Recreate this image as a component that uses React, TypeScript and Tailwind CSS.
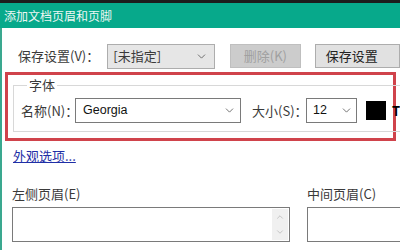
import { ChevronDown, ChevronUp } from 'lucide-react';

const font = { fontFamily: '"Noto Sans CJK SC", "Noto Sans", sans-serif' };

function Combo({ value, className }: { value: string; className: string }) {
  return (
    <div className={`flex items-center justify-between border ${className}`}>
      <span className="font-['Liberation_Sans',Arial,sans-serif]">{value}</span>
      <ChevronDown className="w-[13px] h-[13px] text-[#555]" strokeWidth={1.5} />
    </div>
  );
}

export default function App() {
  return (
    <div
      className="w-[400px] h-[250px] overflow-hidden bg-white flex flex-col text-[13px] text-[#3a3a3a]"
      style={font}
    >
      <div className="h-[3px] bg-[#1c1c1c]" />
      <div className="h-[25px] bg-[#07a98b] text-[#eef7f4] flex items-center px-[4px] text-[12px]">
        添加文档页眉和页脚
      </div>

      <div className="flex-1 border-l-2 border-[#3aa88f] flex flex-col">
        {/* 保存设置 */}
        <div className="flex items-center h-[24px] mt-[16px] whitespace-nowrap">
          <span className="ml-[16px] w-[95px]">保存设置(V)：</span>
          <div className="flex items-center justify-between border w-[114px] h-[25px] bg-[#e6e6e6] border-[#adadad] pl-[5px] pr-[6px]">
            <span>[未指定]</span>
            <ChevronDown className="w-[13px] h-[13px] text-[#555]" strokeWidth={1.5} />
          </div>
          <button className="ml-[15px] w-[75px] h-[24px] bg-[#cccccc] border border-[#bfbfbf] text-[#a0a0a0]">
            删除(K)
          </button>
          <button className="ml-[14px] w-[90px] h-[24px] bg-[#e1e1e1] border border-[#adadad] text-[#222] text-left pl-[10px]">
            保存设置
          </button>
        </div>

        {/* 字体 - highlighted */}
        <div className="mt-[4px] ml-[3px] w-[391px] h-[69px] border-[3px] border-[#d0434b] pl-[5px] pt-[3px] pb-[6px]">
          <fieldset className="border border-[#d8d8d8] h-full px-[7px] pt-[6px] -mr-[4px]">
            <legend className="ml-[6px] px-[2px] leading-[14px]">字体</legend>
            <div className="flex items-center whitespace-nowrap">
              <span className="w-[54px]">名称(N)：</span>
              <Combo
                value="Georgia"
                className="w-[166px] h-[25px] border-[#7a7a7a] pl-[7px] pr-[4px] text-[#111] text-[12.5px]"
              />
              <span className="ml-[11px] w-[54px]">大小(S)：</span>
              <Combo
                value="12"
                className="w-[51px] h-[25px] border-[#7a7a7a] pl-[6px] pr-[3px] text-[#111] text-[12.5px]"
              />
              <div className="ml-[9px] w-[20px] h-[19px] bg-black" />
              <span className="ml-[6px] font-bold text-black">T</span>
            </div>
          </fieldset>
        </div>

        <a href="#" className="ml-[11px] mt-[7px] text-[#1f2fa6] underline leading-[16px] w-fit">
          外观选项...
        </a>

        <div className="flex mt-[22px] gap-[17px] pl-[10px]">
          <div className="flex flex-col w-[278px] shrink-0">
            <span className="leading-[16px]">左侧页眉(E)</span>
            <div className="mt-[5px] h-[35px] border border-[#7a7a7a] flex justify-end p-[1px]">
              <div className="w-[16px] bg-[#f0f0f0] flex flex-col items-center justify-around text-[#aaa]">
                <ChevronUp className="w-[10px] h-[10px]" strokeWidth={1.5} />
                <ChevronDown className="w-[10px] h-[10px]" strokeWidth={1.5} />
              </div>
            </div>
          </div>
          <div className="flex flex-col w-[120px] shrink-0">
            <span className="leading-[16px]">中间页眉(C)</span>
            <div className="mt-[5px] h-[35px] border border-[#7a7a7a]" />
          </div>
        </div>
      </div>
    </div>
  );
}
